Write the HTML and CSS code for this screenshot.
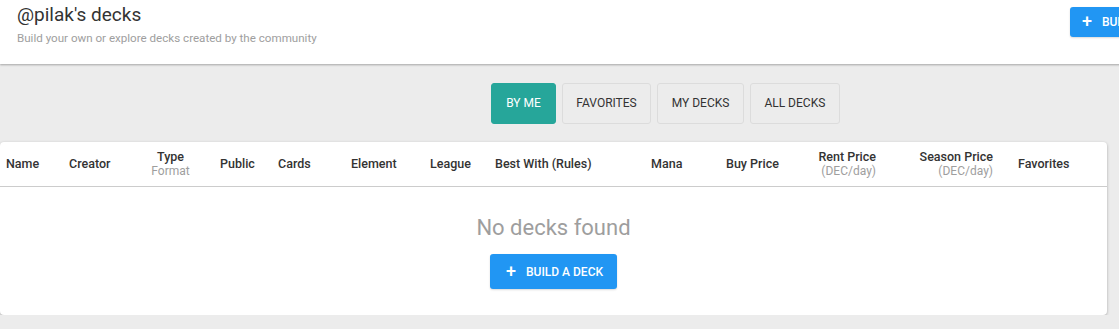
FILE: index.html
```html
<!DOCTYPE html>
<html lang="en">
<head>
    <meta charset="UTF-8">
    <title>@pilak's decks</title>
    <link rel="stylesheet" href="styles.css">
</head>
<body>
    <div class="page">
        <header class="page-header">
            <div class="titles">
                <h1>@pilak's decks</h1>
                <p>Build your own or explore decks created by the community</p>
            </div>
            <button class="btn btn-small"><span class="plus">+</span>Build a deck</button>
        </header>

        <nav class="tabs">
            <a class="tab active" href="#">By me</a>
            <a class="tab" href="#">Favorites</a>
            <a class="tab" href="#">My decks</a>
            <a class="tab" href="#">All decks</a>
        </nav>

        <section class="card">
            <div class="thead">
                <div class="th c-name">Name</div>
                <div class="th c-creator">Creator</div>
                <div class="th c-type">Type<span class="sub">Format</span></div>
                <div class="th c-public">Public</div>
                <div class="th c-cards">Cards</div>
                <div class="th c-element">Element</div>
                <div class="th c-league">League</div>
                <div class="th c-best">Best With (Rules)</div>
                <div class="th c-mana">Mana</div>
                <div class="th c-buy">Buy Price</div>
                <div class="th c-rent">Rent Price<span class="sub">(DEC/day)</span></div>
                <div class="th c-season">Season Price<span class="sub">(DEC/day)</span></div>
                <div class="th c-fav">Favorites</div>
            </div>
            <div class="empty">
                <h2>No decks found</h2>
                <button class="btn"><span class="plus">+</span>Build a deck</button>
            </div>
        </section>
    </div>
</body>
</html>
```

FILE: styles.css
```css
body {
    font-family: 'Roboto', 'Liberation Sans', sans-serif;
    margin: 0;
    padding: 0;
    background-color: #ececec;
    color: #333333;
    overflow: hidden;
}

.page {
    width: 1331px;
}

.page-header {
    background-color: #ffffff;
    height: 64px;
    display: flex;
    justify-content: space-between;
    align-items: flex-start;
    padding: 0 0 0 17px;
    box-shadow: 0 1px 2px rgba(0, 0, 0, 0.3);
    width: 1314px;
}

.titles h1 {
    margin: 3px 0 0;
    font-size: 19px;
    font-weight: 400;
    line-height: 23px;
    color: #333333;
}

.titles p {
    margin: 5px 0 0;
    font-size: 11.6px;
    color: #9e9e9e;
}

.btn {
    background-color: #2196f3;
    color: #ffffff;
    border: none;
    border-radius: 3px;
    font-family: inherit;
    font-size: 12px;
    font-weight: 500;
    text-transform: uppercase;
    height: 35px;
    padding: 0 14px 0 16px;
    display: flex;
    align-items: center;
    box-shadow: 0 1px 2px rgba(0, 0, 0, 0.15);
}

.btn .plus {
    font-size: 18px;
    font-weight: 500;
    margin-right: 10px;
    line-height: 1;
    margin-top: -2px;
}

.btn-small {
    margin: 7px 138px 0 0;
    height: 30px;
    padding: 0 14px 0 12px;
}

.tabs {
    display: flex;
    justify-content: center;
    gap: 6px;
    margin-top: 19px;
}

.tab {
    display: block;
    height: 39px;
    line-height: 39px;
    padding: 0 13.5px;
    border: 1px solid #dcdcdc;
    border-radius: 3px;
    background-color: #ececec;
    color: #333333;
    text-decoration: none;
    text-transform: uppercase;
    font-size: 12px;
}

.tab.active {
    background-color: #26a69a;
    border-color: #26a69a;
    color: #ffffff;
    padding: 0 14px;
}

.card {
    width: 1107px;
    margin-top: 18px;
    background-color: #ffffff;
    border-radius: 4px;
    box-shadow: 0 1px 3px rgba(0, 0, 0, 0.3);
}

.thead {
    display: flex;
    align-items: center;
    height: 44px;
    border-bottom: 1px solid #cccccc;
}

.th {
    box-sizing: border-box;
    padding: 0 6px;
    font-size: 12.5px;
    font-weight: 500;
    line-height: 14px;
    display: flex;
    flex-direction: column;
}

.th .sub {
    font-weight: 400;
    font-size: 12px;
    color: #9e9e9e;
}

.c-name { width: 63px; }
.c-creator { width: 77px; }
.c-type { width: 74px; padding-right: 19px; align-items: center; }
.c-public { width: 58px; }
.c-cards { width: 73px; }
.c-element { width: 79px; }
.c-league { width: 65px; }
.c-best { width: 156px; }
.c-mana { width: 75px; }
.c-buy { width: 80px; }
.c-rent { width: 82px; align-items: flex-end; }
.c-season { width: 130px; padding-right: 19px; align-items: flex-end; }
.c-fav { width: 95px; }

.empty {
    display: flex;
    flex-direction: column;
    align-items: center;
    padding: 28px 0 26px;
}

.empty h2 {
    margin: 0 0 13px;
    font-size: 22px;
    font-weight: 400;
    line-height: 26px;
    color: #9e9e9e;
}
```
